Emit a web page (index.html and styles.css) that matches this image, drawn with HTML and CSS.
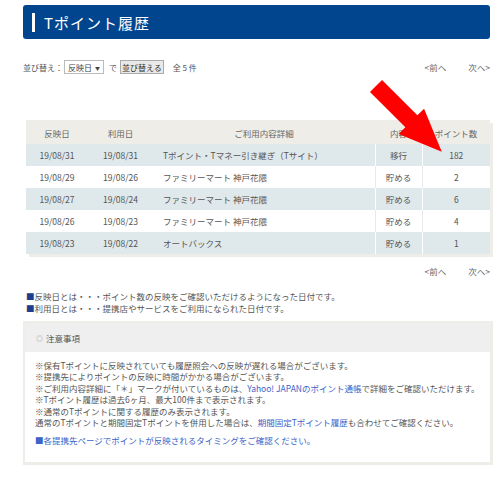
FILE: index.html
```html
<!DOCTYPE html>
<html lang="ja">
<head>
<meta charset="utf-8">
<title>Tポイント履歴</title>
<link rel="stylesheet" href="styles.css">
</head>
<body>
<div class="page">
  <div class="titlebar"><span class="titlebar-mark"></span><h1 class="title">Tポイント履歴</h1></div>

  <div class="sortrow">
    <div class="sort">
      <span>並び替え：</span>
      <span class="select">反映日 <span class="caret">▼</span></span>
      <span>で</span>
      <span class="btn">並び替える</span>
      <span class="count">全 5 件</span>
    </div>
    <div class="pager"><span>&lt;前へ</span><span>次へ&gt;</span></div>
  </div>

  <div class="tablewrap">
    <table class="history">
      <colgroup>
        <col class="c1"><col class="c2"><col class="c3"><col class="c4"><col class="c5">
      </colgroup>
      <thead>
        <tr><th>反映日</th><th>利用日</th><th>ご利用内容詳細</th><th>内容</th><th>ポイント数</th></tr>
      </thead>
      <tbody>
        <tr class="alt"><td>19/08/31</td><td>19/08/31</td><td class="detail">Tポイント・Tマネー引き継ぎ（Tサイト）</td><td class="sep">移行</td><td class="sep">182</td></tr>
        <tr><td>19/08/29</td><td>19/08/26</td><td class="detail">ファミリーマート 神戸花隈</td><td class="sep">貯める</td><td class="sep">2</td></tr>
        <tr class="alt"><td>19/08/27</td><td>19/08/24</td><td class="detail">ファミリーマート 神戸花隈</td><td class="sep">貯める</td><td class="sep">6</td></tr>
        <tr><td>19/08/26</td><td>19/08/23</td><td class="detail">ファミリーマート 神戸花隈</td><td class="sep">貯める</td><td class="sep">4</td></tr>
        <tr class="alt"><td>19/08/23</td><td>19/08/22</td><td class="detail">オートバックス</td><td class="sep">貯める</td><td class="sep">1</td></tr>
      </tbody>
    </table>
  </div>

  <div class="pager pager-bottom"><span>&lt;前へ</span><span>次へ&gt;</span></div>

  <ul class="defs">
    <li><span class="sq">■</span>反映日とは・・・ポイント数の反映をご確認いただけるようになった日付です。</li>
    <li><span class="sq">■</span>利用日とは・・・提携店やサービスをご利用になられた日付です。</li>
  </ul>

  <div class="notice">
    <div class="notice-head"><span class="ring">◎</span> 注意事項</div>
    <div class="notice-body">
      <p>※保有Tポイントに反映されていても履歴照会への反映が遅れる場合がございます。</p>
      <p>※提携先によりポイントの反映に時間がかかる場合がございます。</p>
      <p>※ご利用内容詳細に「＊」マークが付いているものは、<span class="link">Yahoo! JAPANのポイント通帳</span>で詳細をご確認いただけます。</p>
      <p>※Tポイント履歴は過去6ヶ月、最大100件まで表示されます。</p>
      <p>※通常のTポイントに関する履歴のみ表示されます。</p>
      <p>通常のTポイントと期間固定Tポイントを併用した場合は、<span class="link">期間固定Tポイント履歴</span>も合わせてご確認ください。</p>
      <p class="link linkline">■各提携先ページでポイントが反映されるタイミングをご確認ください。</p>
    </div>
  </div>

  <svg class="arrow" width="500" height="479" viewBox="0 0 500 479">
    <polygon fill="#ff0000" points="0,-8.5 50,-8.5 50,-18 93,0 50,18 50,8.5 0,8.5" transform="translate(376,86) rotate(45)"/>
  </svg>
</div>
</body>
</html>
```

FILE: styles.css
```css
* { box-sizing: border-box; }
html, body { margin: 0; padding: 0; background: #fff; }
body {
  font-family: "Noto Sans CJK JP", "Noto Sans", sans-serif;
  color: #555;
  font-size: 8.5px;
}
.page {
  position: relative;
  width: 500px;
  height: 479px;
  padding: 5px 10px 0 23px;
  overflow: hidden;
}
.titlebar {
  height: 34px;
  background: #02458f;
  border-radius: 3px;
  display: flex;
  align-items: center;
  padding-left: 9px;
}
.titlebar-mark {
  width: 3px;
  height: 19px;
  background: #fff;
  margin-right: 9px;
}
.title {
  margin: 0;
  color: #fff;
  font-size: 15px;
  font-weight: normal;
  letter-spacing: 1px;
  line-height: 1;
}
.sortrow {
  margin-top: 21px;
  height: 14px;
  display: flex;
  align-items: center;
  justify-content: space-between;
}
.sort { display: flex; align-items: center; font-size: 8px; }
.select {
  display: inline-flex;
  align-items: center;
  height: 14px;
  width: 40px;
  margin-left: 1px;
  margin-right: 5px;
  padding-left: 3px;
  border: 1px solid #bbb;
  background: #fff;
  color: #444;
}
.caret { font-size: 5px; margin-left: 3px; }
.btn {
  display: inline-flex;
  align-items: center;
  height: 14px;
  margin-left: 3px;
  padding: 0 1px;
  border: 1px solid #aaa;
  background: #e9e9e9;
  color: #333;
}
.count { margin-left: 9px; }
.pager { display: flex; gap: 22px; color: #666; }
.pager-bottom { justify-content: flex-end; margin-top: 11px; }
.tablewrap {
  margin-top: 46px;
  margin-left: 3px;
  background: #efede7;
  box-shadow: 3px 3px 0 #efede7;
}
.history {
  width: 464px;
  border-collapse: collapse;
  table-layout: fixed;
}
.c1 { width: 62px; } .c2 { width: 65px; } .c3 { width: 222px; } .c4 { width: 47px; } .c5 { width: 68px; }
.history th {
  height: 24px;
  font-weight: normal;
  color: #666;
  text-align: center;
  padding: 2px 0 0;
}
.history td {
  height: 22px;
  text-align: center;
  padding: 0;
  background: #fff;
  color: #555;
}
.history tr.alt td { background: #dfe8eb; }
.history td.sep { border-left: 1px solid #e9e9e9; }
.history tr.alt td.sep { border-left-color: #fff; }
.history td.detail { text-align: left; padding-left: 10px; }
.defs {
  list-style: none;
  margin: 14px 0 0 3px;
  padding: 0;
  line-height: 11.5px;
}
.sq { color: #1d3e8e; }
.notice {
  margin-top: 7px;
  border: 2px solid #efede7;
  border-right-width: 3px;
  border-bottom-width: 3px;
  width: 470px;
}
.notice-head {
  height: 29px;
  background: #efefef;
  display: flex;
  align-items: center;
  padding-left: 11px;
  color: #555;
}
.ring { color: #aaa; margin-right: 3px; font-size: 7px; }
.notice-body {
  background: #fff;
  padding: 8px 8px 15px 10px;
  line-height: 11.4px;
}
.notice-body p { margin: 0; }
.link { color: #3c63c8; }
.linkline { margin-top: 7px !important; }
.arrow {
  position: absolute;
  left: 0;
  top: 0;
  pointer-events: none;
}
```
